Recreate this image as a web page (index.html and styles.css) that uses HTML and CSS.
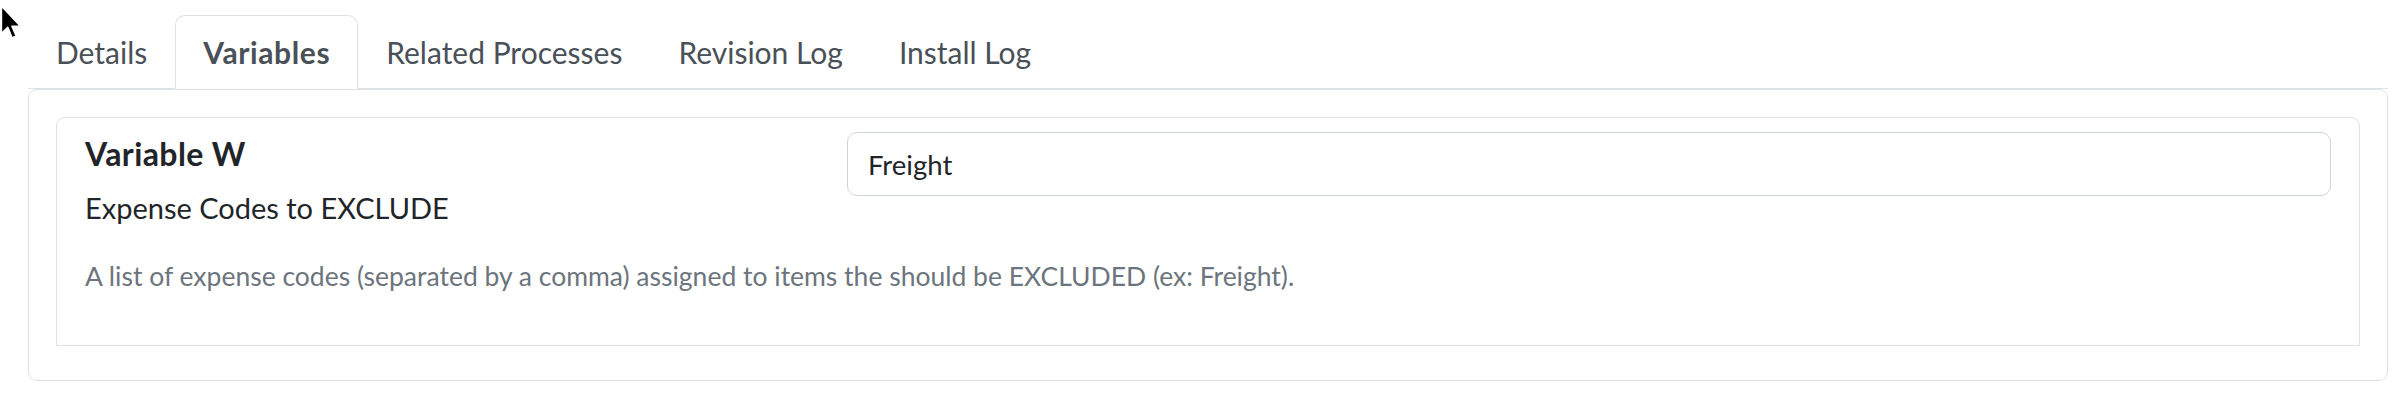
FILE: index.html
```html
<!DOCTYPE html>
<html lang="en">
<head>
<meta charset="utf-8">
<title>Variables</title>
<link rel="stylesheet" href="styles.css">
</head>
<body>
<div class="page">
  <ul class="tabs">
    <li class="tab"><a class="tab-link">Details</a></li>
    <li class="tab"><a class="tab-link active">Variables</a></li>
    <li class="tab"><a class="tab-link">Related Processes</a></li>
    <li class="tab"><a class="tab-link">Revision Log</a></li>
    <li class="tab"><a class="tab-link">Install Log</a></li>
  </ul>
  <div class="panel">
    <div class="var-card">
      <div class="var-row">
        <div class="var-info">
          <h5 class="var-title">Variable W</h5>
          <div class="var-label">Expense Codes to EXCLUDE</div>
        </div>
        <div class="var-field">
          <input class="var-input" type="text" value="Freight">
        </div>
      </div>
      <p class="var-desc">A list of expense codes (separated by a comma) assigned to items the should be EXCLUDED (ex: Freight).</p>
    </div>
  </div>
</div>
<svg class="cursor" width="24" height="36" viewBox="0 0 22 34" aria-hidden="true">
  <path d="M1 1 L1 27 L7 21 L11 31 L15 29.5 L11 20 L19 20 Z" fill="#000" stroke="#fff" stroke-width="1.5" stroke-linejoin="round"/>
</svg>
</body>
</html>
```

FILE: styles.css
```css
html, body {
  margin: 0;
  padding: 0;
  background: #ffffff;
}

body {
  font-family: Lato, "Open Sans", "Liberation Sans", sans-serif;
  color: #212529;
}

.page {
  padding: 15px 20px 0 28px;
}

.tabs {
  display: flex;
  list-style: none;
  margin: 0;
  padding: 0;
  border-bottom: 1px solid #dee2e6;
}

.tab {
  margin-bottom: -1px;
}

.tab-link {
  display: block;
  padding: 14px 27px 13px 27px;
  font-size: 30px;
  line-height: 45px;
  color: #495057;
  border: 1px solid transparent;
  border-top-left-radius: 10px;
  border-top-right-radius: 10px;
  cursor: pointer;
}

.tab-link.active {
  font-weight: 700;
  letter-spacing: 0.6px;
  background: #ffffff;
  border-color: #dee2e6 #dee2e6 #ffffff;
}

.panel {
  border: 1px solid #dee2e6;
  border-radius: 9px;
  padding: 27px 27px 34px 27px;
}

.var-card {
  border: 1px solid #dee2e6;
  border-radius: 9px 9px 0 0;
  padding: 14px 28px 51px 28px;
}

.var-row {
  display: grid;
  grid-template-columns: 722px 1fr;
  column-gap: 40px;
  align-items: start;
}

.var-info {
  padding-top: 4px;
}

.var-title {
  margin: 0 0 15px 0;
  font-size: 32px;
  line-height: 36px;
  font-weight: 700;
  letter-spacing: 0.4px;
  color: #212529;
}

.var-label {
  font-size: 29px;
  line-height: 42px;
  color: #212529;
}

.var-input {
  display: block;
  box-sizing: border-box;
  width: 100%;
  height: 64px;
  margin: 0;
  padding: 0 20px;
  font-family: inherit;
  font-size: 27.5px;
  color: #212529;
  background: #ffffff;
  border: 1px solid #ced4da;
  border-radius: 10px;
  outline: none;
}

.var-desc {
  margin: 29px 0 0 0;
  font-size: 26.5px;
  line-height: 36px;
  color: #6c757d;
}

.cursor {
  position: absolute;
  left: 0;
  top: 5px;
}
```
